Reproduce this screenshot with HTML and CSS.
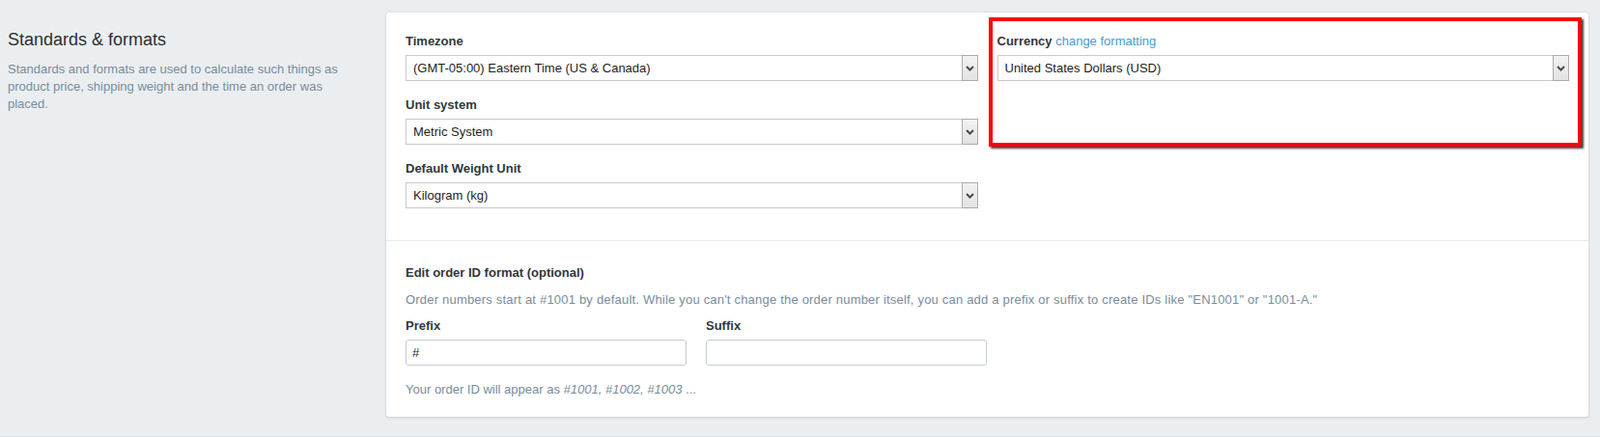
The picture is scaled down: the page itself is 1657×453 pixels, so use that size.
FILE: index.html
```html
<!DOCTYPE html>
<html lang="en">
<head>
<meta charset="utf-8">
<title>Standards &amp; formats</title>
<link rel="stylesheet" href="styles.css">
</head>
<body>
<div class="page">
  <aside class="annotation">
    <h2 class="annotation-title">Standards &amp; formats</h2>
    <p class="annotation-desc">Standards and formats are used to calculate such things as product price, shipping weight and the time an order was placed.</p>
  </aside>
  <section class="card">
    <div class="card-section card-top">
      <div class="col">
        <div class="field">
          <div class="label">Timezone</div>
          <div class="select"><span class="select-text">(GMT-05:00) Eastern Time (US &amp; Canada)</span><span class="select-arrow"><svg width="9" height="6" viewBox="0 0 9 6"><path d="M1 1 L4.5 4.5 L8 1" fill="none" stroke="#4a4a4a" stroke-width="2"/></svg></span></div>
        </div>
        <div class="field">
          <div class="label">Unit system</div>
          <div class="select"><span class="select-text">Metric System</span><span class="select-arrow"><svg width="9" height="6" viewBox="0 0 9 6"><path d="M1 1 L4.5 4.5 L8 1" fill="none" stroke="#4a4a4a" stroke-width="2"/></svg></span></div>
        </div>
        <div class="field">
          <div class="label">Default Weight Unit</div>
          <div class="select"><span class="select-text">Kilogram (kg)</span><span class="select-arrow"><svg width="9" height="6" viewBox="0 0 9 6"><path d="M1 1 L4.5 4.5 L8 1" fill="none" stroke="#4a4a4a" stroke-width="2"/></svg></span></div>
        </div>
      </div>
      <div class="col col-currency">
        <div class="field">
          <div class="label">Currency <a class="link" href="#">change formatting</a></div>
          <div class="select"><span class="select-text">United States Dollars (USD)</span><span class="select-arrow"><svg width="9" height="6" viewBox="0 0 9 6"><path d="M1 1 L4.5 4.5 L8 1" fill="none" stroke="#4a4a4a" stroke-width="2"/></svg></span></div>
        </div>
        <div class="highlight"></div>
      </div>
    </div>
    <div class="card-section card-bottom">
      <div class="label heading">Edit order ID format (optional)</div>
      <p class="help help-intro">Order numbers start at #1001 by default. While you can't change the order number itself, you can add a prefix or suffix to create IDs like "EN1001" or "1001-A."</p>
      <div class="id-row">
        <div class="id-field">
          <div class="label">Prefix</div>
          <input class="text-input" type="text" value="#">
        </div>
        <div class="id-field">
          <div class="label">Suffix</div>
          <input class="text-input" type="text" value="">
        </div>
      </div>
      <p class="help preview">Your order ID will appear as <em>#1001, #1002, #1003</em> ...</p>
    </div>
  </section>
</div>
</body>
</html>
```

FILE: styles.css
```css
* { box-sizing: border-box; }

html, body {
  margin: 0;
  padding: 0;
  background: #ebeef0;
}

body {
  font-family: "Liberation Sans", Arial, sans-serif;
  font-size: 13px;
  line-height: 18px;
  color: #31373d;
}

.page {
  display: flex;
  align-items: flex-start;
  padding: 13px 12px 20px 8px;
  border-bottom: 1px solid #dde2e6;
}

.annotation {
  flex: none;
  width: 392px;
  padding-right: 40px;
  padding-top: 16px;
}

.annotation-title {
  margin: 0 0 10px;
  font-size: 18px;
  line-height: 24px;
  font-weight: normal;
  color: #2b2f33;
}

.annotation-desc {
  margin: 0;
  color: #798c9c;
}

.card {
  flex: 1;
  background: #fff;
  border-radius: 3px;
  box-shadow: 0 0 0 1px rgba(63, 63, 68, 0.04), 0 1px 3px 0 rgba(63, 63, 68, 0.15);
}

.card-section {
  padding: 21px 20px 20px;
}

.card-top {
  display: grid;
  grid-template-columns: 1fr 1fr;
  column-gap: 20px;
  padding-bottom: 33px;
}

.col-currency {
  position: relative;
}

.field + .field {
  margin-top: 16px;
}

.label {
  font-weight: bold;
  color: #31373d;
  margin-bottom: 5px;
}

.link {
  font-weight: normal;
  color: #479ccf;
  text-decoration: none;
}

.select {
  display: flex;
  align-items: stretch;
  height: 27px;
  border: 1px solid #c9c9c9;
  background: #fff;
}

.select-text {
  flex: 1;
  padding-left: 7px;
  line-height: 25px;
  color: #1e1e1e;
}

.select-arrow {
  flex: none;
  width: 17px;
  display: flex;
  align-items: center;
  justify-content: center;
  background: linear-gradient(#f2f2f2, #e3e3e3);
  border: 1px solid #acacac;
  margin: -1px -1px -1px 0;
}

.highlight {
  position: absolute;
  left: -9px;
  top: -16px;
  width: 614px;
  height: 134px;
  border: 4px solid #ff0000;
  box-shadow: 2px 2px 2px rgba(30, 30, 30, 0.85);
  pointer-events: none;
}

.card-bottom {
  border-top: 1px solid #e6e9ec;
  padding-top: 24px;
  padding-bottom: 19px;
}

.heading {
  margin-bottom: 10px;
}

.help {
  margin: 0 0 9px;
  color: #798c9c;
}

.help-intro {
  letter-spacing: 0.2px;
}

.id-row {
  display: flex;
  gap: 20px;
}

.id-field {
  width: 291px;
}

.text-input {
  display: block;
  width: 100%;
  height: 27px;
  margin: 0;
  padding: 0 6px;
  border: 1px solid #c4cdd5;
  border-radius: 3px;
  font-family: inherit;
  font-size: 13px;
  color: #1e1e1e;
  background: #fff;
  outline: none;
}

.preview {
  margin: 16px 0 0;
}

.preview em {
  font-style: italic;
}
```
